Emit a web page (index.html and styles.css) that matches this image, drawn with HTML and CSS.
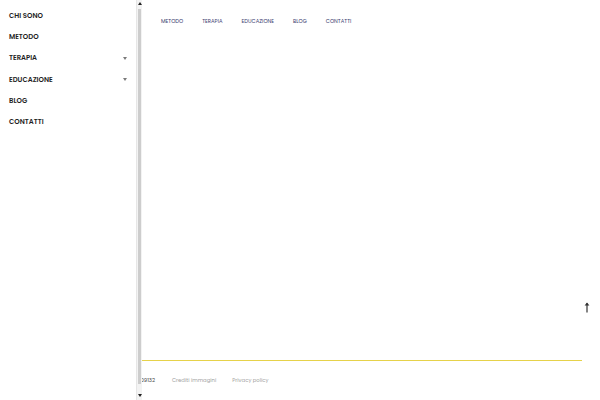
FILE: index.html
```html
<!DOCTYPE html>
<html lang="it">
<head>
<meta charset="utf-8">
<title>Menu</title>
<link rel="stylesheet" href="styles.css">
</head>
<body>
<div class="page">
  <header class="topbar">
    <nav class="nav">
      <a class="nav-link">METODO</a>
      <a class="nav-link">TERAPIA</a>
      <a class="nav-link">EDUCAZIONE</a>
      <a class="nav-link">BLOG</a>
      <a class="nav-link">CONTATTI</a>
    </nav>
  </header>
  <main class="content"></main>
  <footer class="footer">
    <div class="footer-row">
      <span class="footer-vat">P.IVA 0123409132</span>
      <a class="footer-link credits">Crediti immagini</a>
      <a class="footer-link">Privacy policy</a>
    </div>
  </footer>
</div>

<aside class="side-panel">
  <ul class="side-menu">
    <li class="side-item">CHI SONO</li>
    <li class="side-item">METODO</li>
    <li class="side-item">TERAPIA <span class="caret"></span></li>
    <li class="side-item">EDUCAZIONE <span class="caret"></span></li>
    <li class="side-item">BLOG</li>
    <li class="side-item">CONTATTI</li>
  </ul>
  <div class="scrollbar">
    <span class="sb-arrow sb-up"></span>
    <span class="sb-thumb"></span>
    <span class="sb-arrow sb-down"></span>
  </div>
</aside>

<a class="to-top" aria-label="Torna su">
  <svg width="6" height="11" viewBox="0 0 6 11"><path d="M3 1 V10.5" stroke="#333" stroke-width="1.2" fill="none"/><path d="M0.6 3.4 L3 0.6 L5.4 3.4 Z" fill="#333"/></svg>
</a>
</body>
</html>
```

FILE: styles.css
```css
* { box-sizing: border-box; }
html, body { margin: 0; padding: 0; }
body {
  width: 600px;
  height: 400px;
  overflow: hidden;
  background: #ffffff;
  font-family: "Poppins", "Open Sans", "Liberation Sans", sans-serif;
  color: #1c1c1c;
}
.page {
  display: flex;
  flex-direction: column;
  height: 400px;
}
.topbar {
  height: 42px;
  padding-left: 161px;
  display: flex;
  align-items: center;
}
.nav {
  display: flex;
  gap: 19px;
  padding-top: 1px;
}
.nav-link {
  font-size: 5.3px;
  color: #3c3c70;
  white-space: nowrap;
}
.content { flex: 1; }
.footer {
  margin-right: 18px;
  border-top: 1.5px solid #e6d24a;
  height: 40px;
  display: flex;
  align-items: center;
}
.footer-row {
  display: flex;
  align-items: center;
  font-size: 5.3px;
  white-space: nowrap;
}
.footer-vat {
  width: 155px;
  text-align: right;
  color: #444;
  margin-right: 17px;
}
.footer-link { color: #a3a3a3; }
.credits { margin-right: 16px; }

.side-panel {
  position: fixed;
  left: 0;
  top: 0;
  width: 142px;
  height: 400px;
  background: #ffffff;
  display: flex;
}
.side-menu {
  list-style: none;
  margin: 0;
  padding: 5px 9px 0 9px;
  flex: 1;
}
.side-item {
  height: 21.3px;
  display: flex;
  align-items: center;
  justify-content: space-between;
  font-size: 6.9px;
  font-weight: 600;
  color: #1e1e1e;
}
.caret {
  width: 0;
  height: 0;
  border-left: 2.5px solid transparent;
  border-right: 2.5px solid transparent;
  border-top: 3px solid #7a7a7a;
}
.scrollbar {
  width: 6px;
  background: #f3f3f3;
  border-left: 1px solid #e6e6e6;
  display: flex;
  flex-direction: column;
  align-items: center;
}
.sb-arrow {
  width: 0;
  height: 0;
  border-left: 2px solid transparent;
  border-right: 2px solid transparent;
}
.sb-up { border-bottom: 3px solid #222; margin-top: 2px; }
.sb-down { border-top: 3px solid #222; margin-bottom: 3px; }
.sb-thumb {
  flex: 1;
  width: 3px;
  margin: 4px 0 10px;
  background: #cdcdcd;
}
.to-top {
  position: fixed;
  left: 584px;
  top: 302px;
  line-height: 0;
}
```
